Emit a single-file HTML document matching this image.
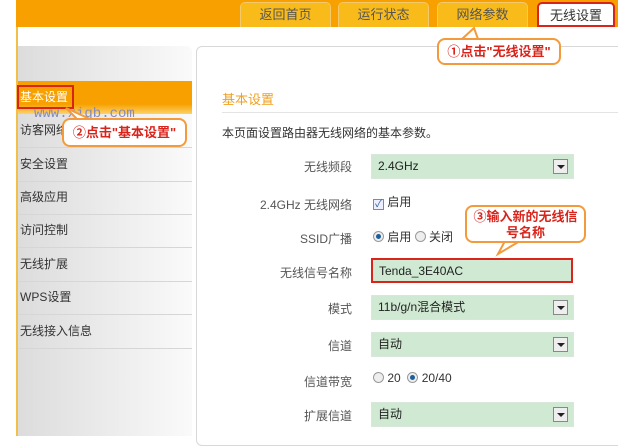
<!DOCTYPE html>
<html><head><meta charset="utf-8"><style>
*{margin:0;padding:0;box-sizing:border-box}
body{width:618px;height:436px;overflow:hidden;background:#fff;font-family:"Liberation Sans","Noto Sans CJK SC",sans-serif;font-size:12px;color:#333;position:relative}
.abs{position:absolute}
.topbar{left:16px;top:0;width:602px;height:27px;background:#f7a000}
.tab{top:2px;height:25px;background:#f8bb1a;border:1px solid #f3c96b;border-bottom:none;border-radius:5px 5px 0 0;color:#555;font-size:13px;text-align:center;line-height:24px}
.vline{left:16px;top:27px;width:2px;height:409px;background:#f2c04a}
.side{left:18px;top:46px;width:174px;height:390px;background:linear-gradient(90deg,#dcdcdc,#fafafa);border-top-right-radius:6px}
.item{left:18px;width:174px;height:34px;line-height:33px;border-bottom:1px solid #d6d6d6;padding-left:2px;font-size:12px;color:#333}
.main{left:196px;top:46px;width:430px;height:400px;border:1px solid #d8d8d8;border-radius:6px;background:#fff}
.lab{width:160px;left:192px;text-align:right;font-size:12px;color:#555}
.sel{left:371px;width:203px;height:25px;background:#cfe9d2;border:1px solid #d9e6da;padding-left:6px;line-height:23px;font-size:12px;color:#222}
.arr{position:absolute;right:5px;top:4px;width:15px;height:15px;border:1px solid #888;background:#eee}
.arr:after{content:"";position:absolute;left:3px;top:5px;border-left:4px solid transparent;border-right:4px solid transparent;border-top:4px solid #222}
.bub{background:#fff;border:2px solid #f39a3c;border-radius:8px;color:#d9241b;font-weight:bold;font-size:13px;text-align:center}
.radio{display:inline-block;width:11px;height:11px;border-radius:50%;border:1px solid #999;background:#eee;vertical-align:-1px;position:relative}
.radio.on:after{content:"";position:absolute;left:2px;top:2px;width:5px;height:5px;border-radius:50%;background:#1a5f9c}
</style></head><body>
<div class="abs topbar"></div>
<div class="abs tab" style="left:240px;width:91px">返回首页</div>
<div class="abs tab" style="left:338px;width:91px">运行状态</div>
<div class="abs tab" style="left:437px;width:91px">网络参数</div>
<div class="abs tab" style="left:537px;width:78px;background:#fff;border:2px solid #d9241b;color:#333">无线设置</div>
<div class="abs vline"></div>
<div class="abs side"></div>
<div class="abs" style="left:18px;top:81px;width:174px;height:33px;background:linear-gradient(#f7a000,#f7a000 70%,#fbd36a)"></div>
<div class="abs" style="left:17px;top:85px;width:57px;height:24px;border:2px solid #d9241b;color:#fff;line-height:20px;padding-left:1px">基本设置</div>
<div class="abs" style="left:34px;top:106px;font-family:'Liberation Mono',monospace;font-size:14px;color:#8a8ab8">www.xiqb.com</div>
<div class="abs item" style="top:114px">访客网络</div>
<div class="abs item" style="top:148px">安全设置</div>
<div class="abs item" style="top:181px">高级应用</div>
<div class="abs item" style="top:214px">访问控制</div>
<div class="abs item" style="top:248px">无线扩展</div>
<div class="abs item" style="top:281px">WPS设置</div>
<div class="abs item" style="top:315px">无线接入信息</div>
<div class="abs main"></div>
<div class="abs" style="left:222px;top:89px;font-size:13px;color:#f0a020">基本设置</div>
<div class="abs" style="left:222px;top:112px;width:396px;height:1px;background:#e3e3e3"></div>
<div class="abs" style="left:222px;top:124px">本页面设置路由器无线网络的基本参数。</div>

<div class="abs lab" style="top:158px">无线频段</div>
<div class="abs sel" style="top:154px">2.4GHz<span class="arr"></span></div>
<div class="abs lab" style="top:196px">2.4GHz 无线网络</div>
<div class="abs" style="left:373px;top:193px"><span style="display:inline-block;width:11px;height:11px;border:1px solid #888;background:#eef;font-size:10px;line-height:9px;color:#1a5f9c;text-align:center;vertical-align:-1px">✓</span> 启用</div>
<div class="abs lab" style="top:230px">SSID广播</div>
<div class="abs" style="left:373px;top:228px"><span class="radio on"></span> 启用 <span class="radio"></span> 关闭</div>
<div class="abs lab" style="top:264px">无线信号名称</div>
<div class="abs sel" style="top:258px;border:2px solid #d9241b;width:202px">Tenda_3E40AC</div>
<div class="abs lab" style="top:300px">模式</div>
<div class="abs sel" style="top:295px">11b/g/n混合模式<span class="arr"></span></div>
<div class="abs lab" style="top:337px">信道</div>
<div class="abs sel" style="top:332px">自动<span class="arr"></span></div>
<div class="abs lab" style="top:373px">信道带宽</div>
<div class="abs" style="left:373px;top:371px"><span class="radio"></span> 20 &nbsp;<span class="radio on"></span> 20/40</div>
<div class="abs lab" style="top:407px">扩展信道</div>
<div class="abs sel" style="top:402px">自动<span class="arr"></span></div>

<svg class="abs" style="left:0;top:0" width="618" height="436">
<polygon points="462,39 474,28 478,39" fill="#fff" stroke="#f39a3c" stroke-width="2"/>
<polygon points="78,120 66,108 92,120" fill="#fff" stroke="#f39a3c" stroke-width="2"/>
<polygon points="505,241 498,254 520,241" fill="#fff" stroke="#f39a3c" stroke-width="2"/>
</svg>
<div class="abs bub" style="left:437px;top:38px;width:124px;height:27px;line-height:23px">①点击"无线设置"</div>
<div class="abs bub" style="left:62px;top:118px;width:125px;height:29px;line-height:25px">②点击"基本设置"</div>
<div class="abs bub" style="left:465px;top:205px;width:121px;height:38px;line-height:16px;padding-top:2px">③输入新的无线信<br>号名称</div>
</body></html>
